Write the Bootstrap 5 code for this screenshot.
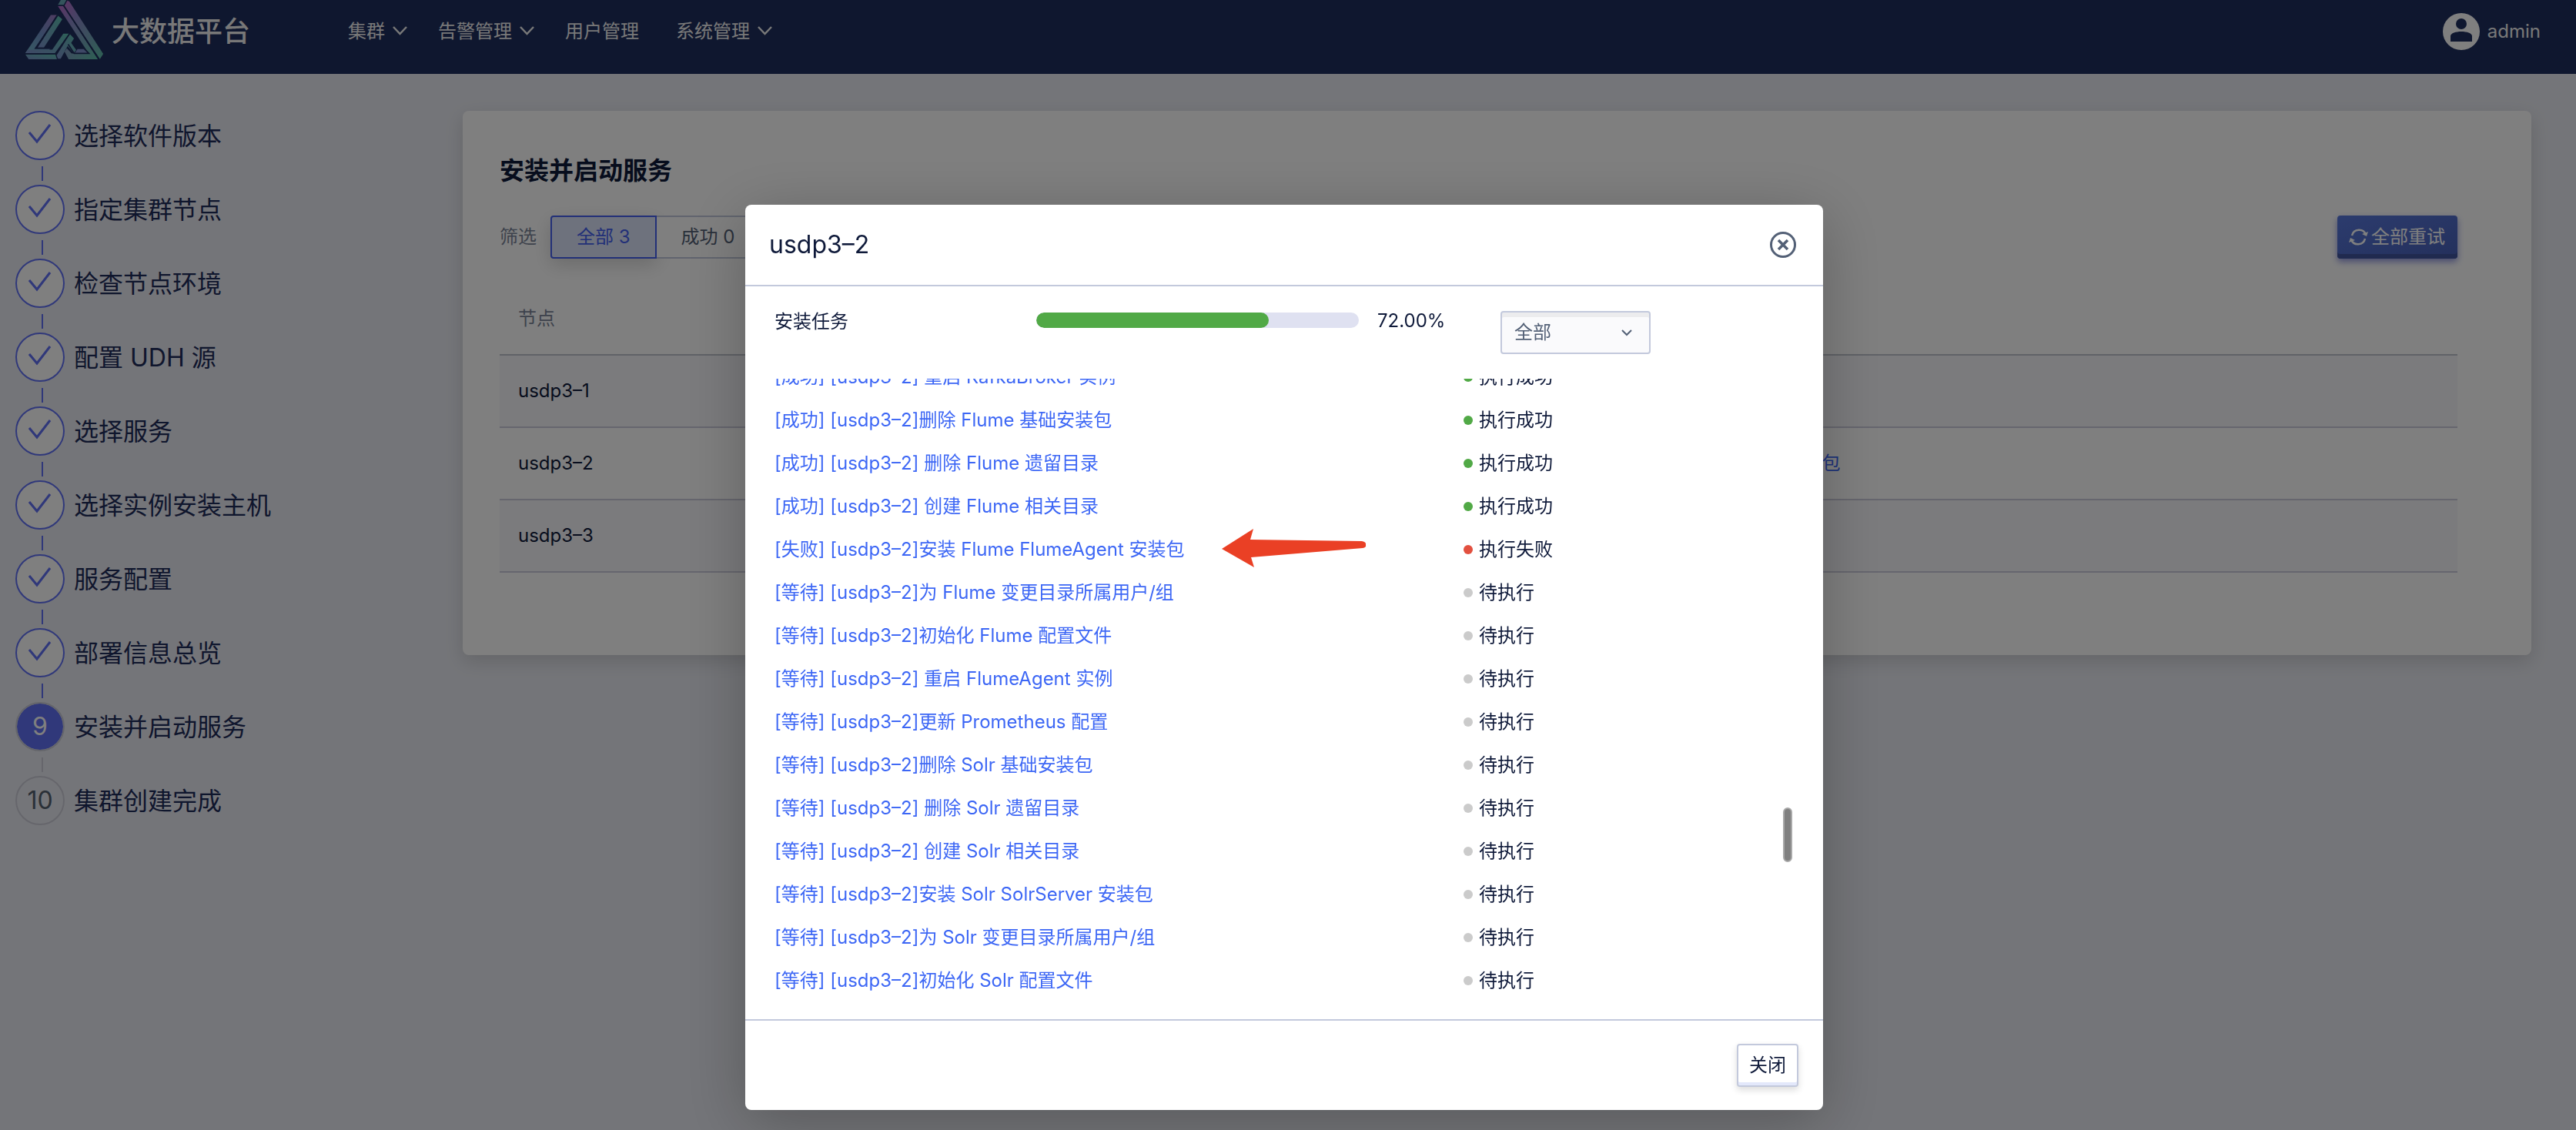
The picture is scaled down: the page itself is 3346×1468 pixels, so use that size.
<!DOCTYPE html>
<html lang="zh-CN">
<head>
<meta charset="utf-8">
<meta name="viewport" content="width=device-width, initial-scale=1">
<title>大数据平台</title>
<link href="https://cdn.jsdelivr.net/npm/bootstrap@5.3.0/dist/css/bootstrap.min.css" rel="stylesheet">
<style>
  :root { --ink: #0f1a3a; --ink-soft: #536076; --line: #c3c9dc; --brand: #3d67f5; --indigo: #6070f4; }
  body { font-family: Inter, "Noto Sans CJK SC", sans-serif; font-size: 24px; line-height: 36px; color: var(--ink); background: #e9ebf2; }
  a { color: var(--brand); text-decoration: none; }

  .topbar { height: 96px; background: #1f2f5f; padding: 0 46px 14px 32px; }
  .topbar a { color: #f0f0f0; }
  .brand-link { width: 420px; gap: 10px; font-size: 36px; font-weight: 500; }
  .brand-link svg { width: 103px; height: 78px; margin-bottom: 4px; }
  .main-menu { gap: 40px; }
  .menu-link { gap: 10px; }
  .menu-link svg { width: 19px; height: 12px; margin-bottom: 2px; }
  .menu-plain { margin-right: 8px; }
  .avatar { width: 48px; height: 48px; }

  .side { width: 601px; padding: 48px 20px; }
  .step-row { height: 64px; }
  .step-text { font-size: 32px; line-height: 66px; margin-left: 12px; color: #1f2c5a; }
  .step-dot { width: 64px; height: 64px; border: 2px solid var(--indigo); background: #fff; font-size: 32px; color: var(--indigo); }
  .step-dot svg { width: 30px; height: 26px; margin-bottom: 4px; }
  .step-now .step-dot { background: var(--indigo); border-color: #c9cbd6; color: #fff; background-clip: padding-box; }
  .step-next .step-dot { background: transparent; border-color: #cccdd8; color: #54606e; }
  .step-bar { width: 2px; height: 19px; margin: 8px 0 5px 34px; background: var(--indigo); }
  .step-now .step-bar { background: #cccdd8; }

  .panel { margin: 48px 58px 0 0; border-radius: 8px; padding: 54px 96px 107px 48px; background: #fff; box-shadow: 0 8px 24px rgba(0,0,0,.14); }
  .panel h1 { font-size: 32px; line-height: 48px; font-weight: 700; margin: 0 0 34px; }
  .soft { color: #7b8598; }
  .filter-label { margin-right: 18px; }
  .seg { height: 56px; padding: 0 32px; border: 2px solid var(--line); border-left-width: 0; background: #fff; color: var(--ink-soft); }
  .seg-on { border: 2px solid #4460f0; border-radius: 4px 0 0 4px; background: #dce5fb; color: #4460f0; box-shadow: 0 8px 24px rgba(0,0,0,.16); }
  .retry { height: 56px; gap: 4px; padding: 0 16px 0 15px; border: 0; border-radius: 4px; color: #fff; background: linear-gradient(160deg, #5878dc, #4860b8); box-shadow: inset 0 -6px 0 #40559f, 0 4px 8px rgba(70,80,200,.6); }
  .retry svg { width: 25px; height: 22px; }
  .nodes { margin: 31px 0 0; width: 100%; table-layout: fixed; }
  .nodes th { height: 94px; padding: 0 24px; font-weight: 400; color: #7b8598; border-bottom: 2px solid #c0c4ce; }
  .nodes td { height: 94px; padding: 0 24px; border-bottom: 2px solid #ccccdc; white-space: nowrap; }
  .nodes tbody tr:nth-child(odd) { background: #f6f6fa; }
  .col-node { width: 1185px; }

  .modal { padding-right: 10px; }
  .modal-dialog { max-width: 1400px; margin: 266px auto 26px; }
  .modal-content { border: 0; border-radius: 8px; box-shadow: 0 16px 80px rgba(0,0,0,.25); color: var(--ink); }
  .modal-header { height: 106px; padding: 0 34px 0 31px; border-bottom: 2px solid var(--line); }
  .modal-title { font-size: 32px; line-height: 48px; font-weight: 400; }
  .close-x { width: 36px; height: 36px; padding: 0; border: 0; background: none; }
  .modal-body { padding: 32px 40px 0 38px; }
  .task-label { width: 340px; padding-top: 2px; line-height: 24px; }
  .bar { width: 419px; height: 20px; margin-top: 2px; border-radius: 10px; background: #dfe1f1; }
  .bar .progress-bar { border-radius: 10px; background: #51a946; }
  .percent { width: 184px; padding: 1px 0 0 24px; line-height: 24px; }
  .filter-box { width: 195px; height: 56px; padding: 0 16px; border: 2px solid var(--line); border-radius: 4px; font-size: 24px; color: var(--ink-soft); background-color: #fafafc; box-shadow: inset 0 6px 0 #ececee;
    background-image: url("data:image/svg+xml,%3Csvg xmlns='http://www.w3.org/2000/svg' viewBox='0 0 14 9'%3E%3Cpath d='M1 1l6 6 6-6' fill='none' stroke='%23536076' stroke-width='2'/%3E%3C/svg%3E"); background-size: 14px 9px; background-position: right 22px center; }
  .log { height: 832px; margin-top: 32px; }
  .log ul { margin: -30px 0 0; }
  .log li { height: 56px; }
  .log-name { width: 895px; }
  .state-dot { width: 12px; height: 12px; border-radius: 50%; margin-right: 8px; background: #cbcbcb; }
  .state-ok { background: #51a946; }
  .state-bad { background: #e2503f; }
  .log-thumb { width: 12px; height: 71px; right: 0; top: 557px; border: 2px solid #a8a8a8; border-radius: 6px; background: #808080; }
  .pointer { left: 581px; top: 0; width: 188px; height: 52px; }
  .modal-footer { height: 118px; padding: 0 32px; border-top: 2px solid var(--line); }
  .modal-footer > * { margin: 0; }
  .close-btn { height: 56px; padding: 0 14px; border: 2px solid var(--line); border-radius: 4px; background: #fff; color: var(--ink); box-shadow: inset 0 -4px 0 #e3e8fb, 0 4px 8px rgba(0,0,0,.14); }
</style>
</head>
<body class="modal-open overflow-hidden">

<header class="topbar d-flex align-items-center">
  <a href="#" class="brand-link d-flex align-items-center">
    <svg viewBox="36 0 308 236" aria-hidden="true">
      <defs>
        <linearGradient id="g1" x1="0" y1="0" x2="1" y2="1"><stop offset="0" stop-color="#b86bc8"/><stop offset=".3" stop-color="#8a86c8"/><stop offset="1" stop-color="#5cc0a8"/></linearGradient>
        <linearGradient id="g2" x1="1" y1="0" x2="0" y2="1"><stop offset="0" stop-color="#a07ac4"/><stop offset=".5" stop-color="#7090c8"/><stop offset="1" stop-color="#70b8c8"/></linearGradient>
        <linearGradient id="g3" x1="0" y1="1" x2="1" y2="0"><stop offset="0" stop-color="#7c90cc"/><stop offset="1" stop-color="#5cc0b0"/></linearGradient>
      </defs>
      <path fill="#68a8b8" d="M176 0h22l-10 19h-23z"/>
      <path fill="url(#g1)" d="M202 2l8 4 133 206-13 20L191 23z"/>
      <path fill="url(#g1)" d="M165 24h22l135 209H207l-16-30 9-13 19 20h67z"/>
      <path fill="url(#g2)" d="M137 59h26L72 192h62l-12 17H37z"/>
      <path fill="url(#g3)" d="M166 62l16 14-72 111H85z"/>
      <path fill="url(#g3)" d="M186 132h23l-54 78H42l-4-2 8-13h97z"/>
      <path fill="url(#g3)" d="M37 214h118l6 19H50z"/>
      <path fill="url(#g3)" d="M212 134l16 17-11 18 20 28-10 12-24-28-27 50h-11l-5-14z"/>
      <path fill="#7c90cc" d="M242 193h29l14 16h-54z"/>
      <path fill="none" stroke="#1f2f5f" stroke-width="5" d="M37 211h118l57-80M163 59L80 189h57M187 22l140 212M205 174l24 36h58l-19-19"/>
    </svg>
    <span>大数据平台</span>
  </a>
  <nav class="main-menu d-flex flex-grow-1" aria-label="主菜单">
    <a href="#" class="menu-link d-flex align-items-center">集群<svg viewBox="0 0 19 12"><path d="M1 1l8.500 9L18 1" fill="none" stroke="#f0f0f0" stroke-width="2.500"/></svg></a>
    <a href="#" class="menu-link d-flex align-items-center">告警管理<svg viewBox="0 0 19 12"><path d="M1 1l8.500 9L18 1" fill="none" stroke="#f0f0f0" stroke-width="2.500"/></svg></a>
    <a href="#" class="menu-plain">用户管理</a>
    <a href="#" class="menu-link d-flex align-items-center">系统管理<svg viewBox="0 0 19 12"><path d="M1 1l8.500 9L18 1" fill="none" stroke="#f0f0f0" stroke-width="2.500"/></svg></a>
  </nav>
  <a href="#" class="menu-link d-flex align-items-center">
    <svg class="avatar m-0" style="width:48px;height:48px" viewBox="0 0 48 48"><circle cx="24" cy="24" r="24" fill="#fff"/><circle cx="24" cy="14" r="7" fill="#1f2f5f"/><path d="M10 37v-7c0-8 28-8 28 0v7z" fill="#1f2f5f"/></svg>
    <span>admin</span>
  </a>
</header>

<div class="d-flex align-items-start">
  <aside class="side flex-shrink-0">
    <ol class="list-unstyled m-0" id="steps"></ol>
  </aside>
  <main class="panel flex-grow-1">
    <h1>安装并启动服务</h1>
    <div class="d-flex align-items-center">
      <span class="soft filter-label">筛选</span>
      <div class="d-flex" role="group" aria-label="筛选">
        <button type="button" class="seg seg-on">全部 3</button>
        <button type="button" class="seg">成功 0</button>
      </div>
      <button type="button" class="retry d-flex align-items-center ms-auto">
        <svg viewBox="0 0 25 22" fill="none" stroke="#fff" stroke-width="2.500"><path d="M4 9c2-9 15-10 18-1M21 13c-2 9-15 10-18 1"/><path d="M17 7l6 3 2-6zM8 15l-6-3-2 6z" fill="#fff" stroke="none"/></svg>全部重试
      </button>
    </div>
    <table class="nodes">
      <thead><tr><th class="col-node">节点</th><th></th></tr></thead>
      <tbody>
        <tr><td>usdp3–1</td><td></td></tr>
        <tr><td>usdp3–2</td><td><a href="#">[失败] [usdp3–2]安装 Flume FlumeAgent 安装包</a></td></tr>
        <tr><td>usdp3–3</td><td></td></tr>
      </tbody>
    </table>
  </main>
</div>

<div class="modal-backdrop show"></div>
<div class="modal show d-block" tabindex="-1" role="dialog" aria-labelledby="dlgTitle">
  <div class="modal-dialog">
    <div class="modal-content">
      <div class="modal-header">
        <h2 class="modal-title" id="dlgTitle">usdp3–2</h2>
        <button type="button" class="close-x d-flex" aria-label="关闭">
          <svg viewBox="0 0 36 36" fill="none" stroke="#536076" stroke-width="3"><circle cx="18" cy="18" r="15.500"/><path d="M12 12l12 12M24 12L12 24" stroke-width="3.500"/></svg>
        </button>
      </div>
      <div class="modal-body">
        <div class="d-flex align-items-start">
          <div class="task-label">安装任务</div>
          <div class="progress bar" role="progressbar" aria-valuenow="72" aria-valuemin="0" aria-valuemax="100"><div class="progress-bar" style="width:72%"></div></div>
          <div class="percent">72.00%</div>
          <select class="form-select filter-box" aria-label="状态"><option>全部</option></select>
        </div>
        <div class="log position-relative overflow-hidden">
          <ul class="list-unstyled" id="log"></ul>
          <div class="log-thumb position-absolute"></div>
        </div>
      </div>
      <div class="modal-footer">
        <button type="button" class="close-btn">关闭</button>
      </div>
    </div>
  </div>
</div>

<script src="https://cdn.jsdelivr.net/npm/bootstrap@5.3.0/dist/js/bootstrap.bundle.min.js"></script>
<script>
  const steps = ['选择软件版本', '指定集群节点', '检查节点环境', '配置 UDH 源', '选择服务', '选择实例安装主机', '服务配置', '部署信息总览', '安装并启动服务', '集群创建完成'];
  const tick = '<svg viewBox="0 0 30 26" fill="none" stroke="currentColor" stroke-width="3"><path d="M1 11l10 12L28 1"/></svg>';
  document.getElementById('steps').innerHTML = steps.map((t, i) =>
    `<li class="${i === 8 ? 'step-now' : i === 9 ? 'step-next' : ''}"><div class="step-row d-flex"><span class="step-dot rounded-circle d-flex align-items-center justify-content-center">${i < 8 ? tick : i + 1}</span><span class="step-text">${t}</span></div>${i < 9 ? '<div class="step-bar"></div>' : ''}</li>`).join('');

  const log = [
    ['成功', '] 重启 KafkaBroker 实例'], ['成功', ']删除 Flume 基础安装包'], ['成功', '] 删除 Flume 遗留目录'],
    ['成功', '] 创建 Flume 相关目录'], ['失败', ']安装 Flume FlumeAgent 安装包'], ['等待', ']为 Flume 变更目录所属用户/组'],
    ['等待', ']初始化 Flume 配置文件'], ['等待', '] 重启 FlumeAgent 实例'], ['等待', ']更新 Prometheus 配置'],
    ['等待', ']删除 Solr 基础安装包'], ['等待', '] 删除 Solr 遗留目录'], ['等待', '] 创建 Solr 相关目录'],
    ['等待', ']安装 Solr SolrServer 安装包'], ['等待', ']为 Solr 变更目录所属用户/组'], ['等待', ']初始化 Solr 配置文件']
  ];
  const state = { '成功': ['state-ok', '执行成功'], '失败': ['state-bad', '执行失败'], '等待': ['', '待执行'] };
  const arrow = '<svg class="pointer position-absolute" viewBox="0 0 188 52"><path d="M0 27L41 1 37 15 182 17Q188 18 187 22 188 25 183 26L38 38 42 51z" fill="#ea4025"/></svg>';
  document.getElementById('log').innerHTML = log.map(([s, t]) =>
    `<li class="d-flex align-items-center position-relative"><div class="log-name"><a href="#">[${s}] [usdp3–2${t}</a></div><span class="state-dot ${state[s][0]}"></span><span>${state[s][1]}</span>${s === '失败' ? arrow : ''}</li>`).join('');
</script>
</body>
</html>
